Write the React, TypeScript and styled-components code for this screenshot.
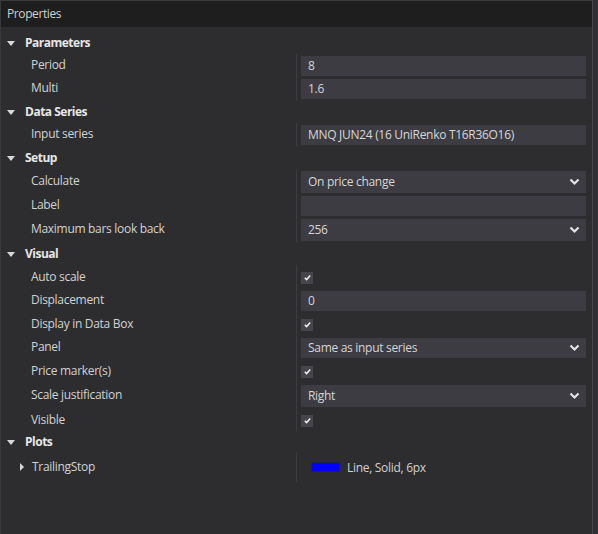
import React from "react";
import styled, { createGlobalStyle } from "styled-components";

const Global = createGlobalStyle`
  html, body { margin: 0; padding: 0; background: #303034; }
  body { font-family: "Segoe UI", "Open Sans", "Noto Sans", sans-serif; font-size: 12px; letter-spacing: -0.3px; }
  * { box-sizing: border-box; }
`;

const Panel = styled.div`
  width: 593px;
  height: 534px;
  background: #2d2d30;
  border-left: 1px solid #38383c;
  border-right: 1px solid #46464b;
  display: flex;
  flex-direction: column;
`;

const Header = styled.div`
  height: 27px;
  flex: none;
  background: #1e1e1f;
  border-top: 1px solid #3a3a3d;
  color: #cfcfcf;
  padding: 0 0 2px 6px;
  display: flex;
  align-items: center;
  font-size: 12px;
  letter-spacing: -0.4px;
`;

const Body = styled.div`
  padding-top: 4px;
  display: flex;
  flex-direction: column;
`;

const CategoryRow = styled.div<{ $h?: number }>`
  height: ${(p) => p.$h ?? 23}px;
  display: flex;
  align-items: center;
  color: #e6e6e6;
  font-weight: 700;
  letter-spacing: -0.5px;
  padding-bottom: 1px;
`;

const Caret = styled.span<{ $open?: boolean }>`
  display: inline-block;
  width: 0;
  height: 0;
  ${(p) =>
    p.$open
      ? `border-left: 4.5px solid transparent; border-right: 4.5px solid transparent; border-top: 5px solid #d8d8d8; margin: 2px 10px 0 6px;`
      : `border-top: 4px solid transparent; border-bottom: 4px solid transparent; border-left: 4px solid #d8d8d8; margin: 1px 8px 0 19px;`}
`;

const PropRow = styled.div<{ $h?: number }>`
  display: grid;
  grid-template-columns: 295px 1fr;
  min-height: ${(p) => p.$h ?? 23}px;
`;

const NameCell = styled.div`
  display: flex;
  align-items: center;
  padding: 0 0 2px 30px;
  color: #d2d2d2;
  white-space: nowrap;
`;

const ValueCell = styled.div`
  border-left: 1px solid #3d3d41;
  padding: 2px 6px 1px 4px;
  display: flex;
  align-items: center;
`;

const Field = styled.div<{ $h?: number }>`
  flex: 1;
  height: ${(p) => p.$h ?? 20}px;
  background: #3d3c43;
  color: #d6d6d6;
  display: flex;
  align-items: center;
  padding: 0 6px 2px 7px;
  justify-content: space-between;
`;

const Check = styled.div`
  width: 12px;
  height: 12px;
  background: #45454b;
  display: flex;
  align-items: center;
  justify-content: center;
`;

const PlotName = styled.div`
  display: flex;
  align-items: center;
  color: #d2d2d2;
  padding-bottom: 1px;
`;

const PlotValue = styled.div`
  border-left: 1px solid #3d3d41;
  display: flex;
  align-items: center;
  padding-left: 14px;
  color: #d2d2d2;
  gap: 7px;
`;

const Swatch = styled.span`
  width: 29px;
  height: 10px;
  background: #0000ff;
  border: 1px solid #23234a;
`;

const Chevron = () => (
  <svg width="11" height="8" viewBox="0 0 11 8" style={{ marginTop: 2 }}>
    <polyline points="1.5,1.5 5.5,5.5 9.5,1.5" fill="none" stroke="#e4e4e4" strokeWidth="2.2" />
  </svg>
);

const Tick = () => (
  <svg width="9" height="9" viewBox="0 0 9 9">
    <polyline points="1.8,4.8 3.6,6.6 7.2,2.4" fill="none" stroke="#f0f0f0" strokeWidth="1.5" />
  </svg>
);

type Prop =
  | { name: string; kind: "input"; value: string }
  | { name: string; kind: "select"; value: string; h?: number }
  | { name: string; kind: "check" };

const groups: { title: string; props: Prop[] }[] = [
  {
    title: "Parameters",
    props: [
      { name: "Period", kind: "input", value: "8" },
      { name: "Multi", kind: "input", value: "1.6" },
    ],
  },
  {
    title: "Data Series",
    props: [{ name: "Input series", kind: "input", value: "MNQ JUN24 (16 UniRenko T16R36O16)" }],
  },
  {
    title: "Setup",
    props: [
      { name: "Calculate", kind: "select", value: "On price change" },
      { name: "Label", kind: "input", value: "" },
      { name: "Maximum bars look back", kind: "select", value: "256" },
    ],
  },
  {
    title: "Visual",
    props: [
      { name: "Auto scale", kind: "check" },
      { name: "Displacement", kind: "input", value: "0" },
      { name: "Display in Data Box", kind: "check" },
      { name: "Panel", kind: "select", value: "Same as input series", h: 20 },
      { name: "Price marker(s)", kind: "check" },
      { name: "Scale justification", kind: "select", value: "Right" },
      { name: "Visible", kind: "check" },
    ],
  },
];

function renderProp(p: Prop) {
  if (p.kind === "check") {
    return (
      <PropRow key={p.name} $h={24}>
        <NameCell>{p.name}</NameCell>
        <ValueCell>
          <Check>
            <Tick />
          </Check>
        </ValueCell>
      </PropRow>
    );
  }
  if (p.kind === "select") {
    const h = p.h ?? 22;
    return (
      <PropRow key={p.name} $h={h + 3}>
        <NameCell>{p.name}</NameCell>
        <ValueCell>
          <Field $h={h}>
            <span>{p.value}</span>
            <Chevron />
          </Field>
        </ValueCell>
      </PropRow>
    );
  }
  return (
    <PropRow key={p.name}>
      <NameCell>{p.name}</NameCell>
      <ValueCell>
        <Field>{p.value}</Field>
      </ValueCell>
    </PropRow>
  );
}

export default function App() {
  return (
    <>
      <Global />
      <Panel>
        <Header>Properties</Header>
        <Body>
          {groups.map((g) => (
            <React.Fragment key={g.title}>
              <CategoryRow>
                <Caret $open />
                {g.title}
              </CategoryRow>
              {g.props.map(renderProp)}
            </React.Fragment>
          ))}
          <CategoryRow $h={20}>
            <Caret $open />
            Plots
          </CategoryRow>
          <PropRow $h={30}>
            <PlotName>
              <Caret />
              TrailingStop
            </PlotName>
            <PlotValue>
              <Swatch />
              Line, Solid, 6px
            </PlotValue>
          </PropRow>
        </Body>
      </Panel>
    </>
  );
}
